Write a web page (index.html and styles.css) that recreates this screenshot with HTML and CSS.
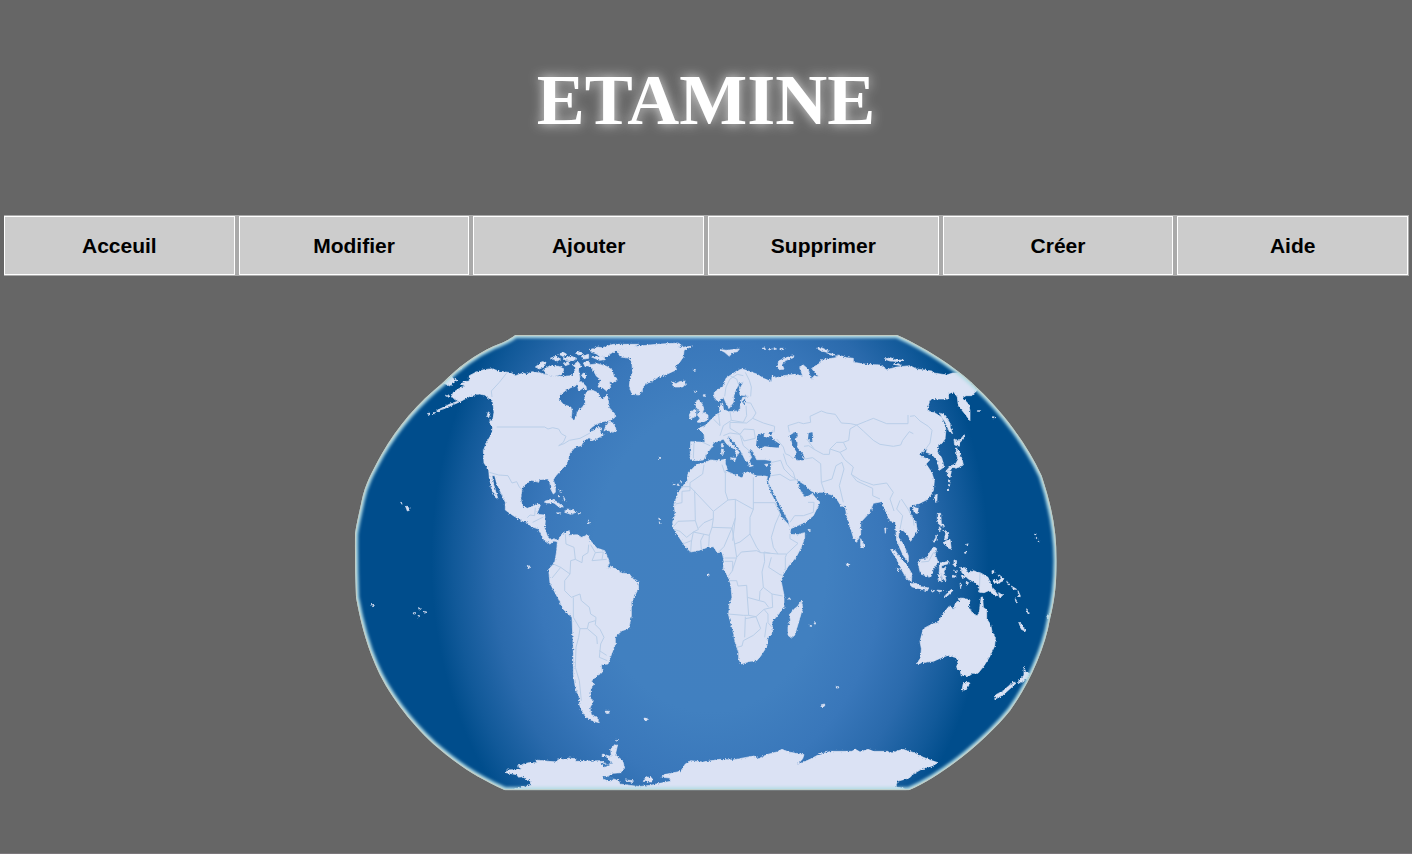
FILE: index.html
```
<!DOCTYPE html>
<html lang="fr">
<head>
<meta charset="utf-8">
<title>ETAMINE</title>
<link rel="stylesheet" href="styles.css">
</head>
<body>
<header class="banner"><h1 class="title">ETAMINE</h1></header>
<nav class="menu">
<a class="menu-item" href="#">Acceuil</a>
<a class="menu-item" href="#">Modifier</a>
<a class="menu-item" href="#">Ajouter</a>
<a class="menu-item" href="#">Supprimer</a>
<a class="menu-item" href="#">Créer</a>
<a class="menu-item" href="#">Aide</a>
</nav>
<main class="content">
<svg class="map" viewBox="9 13 2118 1392" role="img" aria-label="Carte du monde">
<defs>
<radialGradient id="ocean" gradientUnits="userSpaceOnUse" cx="0" cy="0" r="1" gradientTransform="translate(1080 705) scale(836 1080)">
<stop offset="0" stop-color="#4280c0"/><stop offset=".42" stop-color="#4180c0"/><stop offset=".62" stop-color="#3977ba"/><stop offset=".78" stop-color="#2a6aac"/><stop offset=".92" stop-color="#115999"/><stop offset="1" stop-color="#004d8c"/>
</radialGradient>
<path id="globe" d="M496 28H1641C1740 72 1835 138 1885 190C1960 260 2030 355 2075 450C2105 540 2120 615 2120 705C2120 790 2110 840 2100 880C2085 970 2035 1080 1980 1155C1920 1230 1790 1345 1676 1394H465C370 1350 320 1315 250 1255C180 1190 110 1100 75 1015C45 945 30 880 18 815Q14 720 15 625C20 590 28 560 35 525C45 475 65 440 95 385C145 300 200 235 280 170C330 120 375 88 430 62Q480 42 496 28Z"/>
<clipPath id="disc"><use href="#globe"/></clipPath>
<filter id="soft" x="-5%" y="-5%" width="110%" height="110%"><feGaussianBlur stdDeviation="4"/></filter>
<filter id="coast" x="-5%" y="-5%" width="110%" height="110%" color-interpolation-filters="sRGB"><feTurbulence type="fractalNoise" baseFrequency=".2" numOctaves="2" seed="4" result="noise"/><feDisplacementMap in="SourceGraphic" in2="noise" scale="9" xChannelSelector="R" yChannelSelector="G"/></filter>
</defs>
<g clip-path="url(#disc)">
<use href="#globe" fill="url(#ocean)"/>
<g class="land">
<!-- North America -->
<path d="M358 150L375 141 398 133 424 129 450 137 482 141 496 150 520 142 530 146 546 138 572 142 604 152 640 152 668 150 676 132 684 124 690 160 684 175 662 186 646 195 630 208 626 220 640 236 662 244 666 256 664 276 672 284 680 272 682 256 696 246 706 232 704 212 712 196 728 194 745 202 750 214 758 222 772 206 778 246 794 264 794 276 780 284 758 288 738 296 724 306 716 318 730 316 742 304 756 308 750 320 760 328 738 340 724 346 720 336 700 346 694 360 676 364 660 382 654 402 650 416 632 434 618 450 610 462 616 482 616 500 610 505 602 490 600 470 590 460 568 462 566 470 545 464 526 476 516 490 512 520 518 542 532 548 548 542 556 536 572 536 564 556 560 566 584 568 586 585 584 608 592 630 605 643 615 637 626 650 612 645 600 655 580 640 565 610 545 603 530 590 515 585 490 570 466 553 466 530 452 500 440 472 434 450 426 450 432 480 444 520 436 515 424 488 418 455 416 432 402 412 400 375 410 350 425 325 428 306 418 288 428 284 432 260 428 225 412 215 405 208 385 205 360 212 330 228 280 250 262 254 300 235 325 226 304 214 310 200 325 190 345 180 330 175 340 168 358 166Z"/>
<path d="M276 170L290 158 302 145 308 158 322 164 306 174 302 182ZM324 128L332 122 334 130ZM232 264L240 262 240 268ZM246 262L254 260 252 266ZM258 257L270 252 268 258ZM288 210L298 210 294 216ZM414 260L420 262 416 276 412 270ZM420 284L440 306 434 310 422 296ZM584 527L602 521 618 527 640 543 630 546 612 532 588 532ZM644 560L650 550 668 552 678 560 662 566ZM620 562L632 561 628 566ZM684 560L692 562 686 566ZM630 490L634 498 630 500ZM624 508L630 514 626 514ZM640 512L648 528 644 526ZM152 530L158 532 156 536ZM166 540L176 546 178 554 172 556ZM714 582L718 590 716 596Z"/>
<!-- Arctic islands and Greenland -->
<path d="M556 124L576 108 588 110 582 124 568 130ZM580 132L600 120 626 122 642 130 636 146 612 152 592 148ZM600 98L618 92 632 100 622 106ZM626 86L640 80 650 86 640 92ZM640 98L664 92 680 98 668 106 646 104ZM640 112L654 108 658 116 646 120ZM668 118L684 108 694 122 684 132ZM676 82L690 76 698 84 686 88ZM700 112L716 106 720 116 706 124ZM694 92L716 86 716 98 700 100ZM720 72L744 64 756 66 790 56 832 56 866 56 846 66 810 72 788 80 770 92 752 94 738 84 724 80ZM720 92L760 94 766 102 748 104ZM716 118L742 114 770 122 788 134 790 148 802 160 792 170 778 168 782 186 770 196 758 186 744 184 752 162 738 150 730 134ZM680 170L694 168 708 182 710 192 698 188 686 196ZM700 142L710 148 704 160 694 150ZM770 294L782 286 794 300 800 316 788 320 768 312 762 316Z"/>
<path d="M800 76L844 64 860 62 920 56 984 52 994 58 986 66 1024 62 1002 74 1000 94 986 114 974 118 980 132 954 144 938 150 914 160 906 168 886 174 876 194 868 208 846 206 838 182 840 160 848 142 846 116 840 98 812 94ZM966 168L978 174 988 168 1004 166 1008 174 998 184 970 184ZM1110 72L1130 74 1168 70 1162 78 1142 82 1138 92 1124 80Z"/>
<path d="M1030 131H1036V134H1030ZM1034 196H1040V200H1034ZM1060 207H1066V212H1060ZM1236 68L1246 66 1246 72ZM1256 68L1266 71 1258 73ZM1272 66L1280 70 1272 72ZM1290 68L1302 68 1300 72 1290 73ZM926 394L932 397 930 400ZM968 472L976 476 970 477ZM980 478L984 474 988 480ZM990 470L994 466 994 472ZM926 577L930 580 928 583ZM928 588L932 592 928 594Z"/>
</g>
<g transform="translate(990 0)">
<g class="land">
<!-- Europe and Asia -->
<path d="M170 136L186 130 205 136 232 146 250 158 275 168 276 150 290 156 310 150 345 146 368 150 358 124 370 118 384 130 390 150 396 162 402 150 418 154 404 140 395 128 420 112 424 102 440 100 468 96 475 88 500 96 520 98 520 110 560 116 600 118 620 132 650 124 690 120 710 130 755 136 762 142 800 148 818 142 840 142 865 165 893 192 875 210 858 210 848 216 866 236 870 255 870 285 855 265 835 240 832 214 820 198 805 205 806 220 750 220 742 255 765 262 785 275 798 310 795 340 785 354 775 355 772 378 785 396 792 424 778 434 772 405 755 385 738 380 742 370 732 372 720 388 728 395 750 402 738 415 755 440 763 465 760 495 745 520 715 535 698 538 688 546 690 565 708 590 712 615 692 647 685 630 670 615 658 613 655 635 670 655 685 690 685 708 670 690 650 645 646 590 630 585 620 565 605 528 580 533 570 560 542 590 542 625 530 650 520 635 500 570 495 540 484 542 470 520 455 508 430 500 402 500 392 495 384 486 372 476 350 462 358 488 372 514 384 512 397 504 405 515 420 530 400 570 375 590 330 610 325 585 305 550 295 530 265 470 272 450 274 405 255 402 230 402 222 385 216 372 205 375 215 395 208 405 214 420 196 404 180 372 150 335 143 330 148 345 178 380 166 398 168 374 140 355 130 340 118 346 100 352 95 365 80 385 70 403 45 405 30 400 32 348 75 350 72 325 55 308 75 300 100 275 120 260 118 240 128 232 130 250 145 258 180 255 182 232 188 215 212 212 180 208 178 192 190 170 178 172 162 205 160 230 148 248 138 232 130 215 115 228 102 215 103 200 130 180 138 158Z"/>
<path d="M46 228L56 222 66 234 72 250 68 258 84 268 84 282 68 290 50 290 60 278 52 268 58 256 48 244ZM34 256L48 250 48 272 30 280 28 268ZM124 354H130V364H124ZM124 370L130 370 130 386 124 386ZM150 396L168 398 164 406ZM206 416L220 420 208 423ZM254 416L266 415 260 423ZM292 124L296 106 318 96 342 90 340 96 318 104 306 116 312 130 298 132ZM410 68L424 66 446 76 442 80 424 76ZM440 82L472 88 452 88ZM612 100L632 96 644 102 672 104 660 108 630 106ZM640 116L656 114 664 120Z"/>
<!-- East Asian islands -->
<path d="M778 262L790 266 806 286 814 300 810 304 818 324 808 318 798 294ZM822 340L834 346 844 338 852 328 850 340 840 350 838 362 824 358ZM828 366L838 378 846 400 850 418 838 424 828 428 820 424 810 434 798 436 812 420 826 416 834 402 830 384ZM802 436L814 436 810 456 802 450ZM806 462L810 464 808 470ZM804 490L808 492 804 496ZM766 508L772 506 770 530 764 524ZM700 542L716 540 712 564 702 560ZM892 255H902V257H892ZM936 272L948 276 938 276Z"/>
</g>
<g class="sea">
<path d="M228 362L232 330 246 322 256 324 250 332 262 336 274 330 280 342 298 354 296 366 272 364 254 362 240 370ZM264 322L278 318 274 328ZM328 330L344 320 354 324 352 334 344 340 352 352 352 366 370 386 370 404 350 404 344 392 350 380 338 360 334 344ZM386 322L396 320 400 334 394 348 384 340ZM186 228L196 218 194 238ZM720 540L710 536 700 544 716 548Z"/>
</g>
<g class="border">
<path d="M134 212L138 184 150 160 172 146 190 150M196 140L208 164 214 184 212 212M180 190L170 160 150 150M150 258L154 284 130 300 120 330M154 284L190 290 200 270 198 240M190 230L212 232 228 262 218 278 250 292 284 302 282 320M218 278L200 292 150 290 150 308 180 326 192 310 222 312 226 338 192 346 184 330M115 262L120 300 100 280M130 330L150 322 180 326 190 360 204 372M340 400L330 390 316 384 310 364 290 340M328 320L324 300 356 290 370 294 392 290 390 272 424 256 440 262 466 266 484 292 512 294 530 298 560 286 580 278 620 294 660 294 684 294V268M690 272L704 270 720 286 745 302 756 314 750 352 730 380M530 298L550 316 580 344 600 356 640 362 662 358 668 344 688 318 700 324M530 298L510 310 506 344 490 350 500 370 480 380 494 402 520 424 514 446 542 464 580 478M514 446L530 466 578 488 578 510 600 520M580 478L620 472 640 500 630 520 642 556M660 524L650 550 668 570 660 610M664 520L684 550 700 580 702 600M372 362L386 360 404 372 430 386 448 386 450 370 470 350 490 350M450 370L480 380M404 372L380 340M374 400L398 396 422 414 424 470 434 500M424 470L456 460 468 420 486 410M486 410L492 430 478 480 490 530M276 410L302 404 312 430 334 452 350 462M310 384L320 416 340 440 346 462M274 450L300 446 330 464 350 462M330 590L344 570 370 570 400 560 402 530 384 530M42 352L40 398M68 350L90 360"/>
</g>
</g>
<!-- Africa -->
<g transform="translate(870 345)">
<g class="land"><path d="M168 72L190 68 212 58 234 60 256 56 256 70 262 82 256 90 284 102 306 112 312 98 322 94 350 106 374 106 382 108 380 122 386 138 394 160 410 190 416 210 424 228 444 250 452 264 450 280 470 282 494 276 494 292 484 320 468 350 444 378 428 404 424 424 432 464 432 500 418 518 396 544 398 578 384 592 380 618 362 646 350 660 330 662 304 670 296 656 296 636 286 606 278 566 266 524 268 494 276 470 272 430 264 408 250 384 252 360 246 334 232 336 220 318 202 320 182 328 152 334 136 318 120 294 100 262 98 244 106 222 102 190 116 154 130 134 142 122 144 96 160 82ZM484 478L488 502 476 544 464 584 454 592 444 584 444 556 452 540 448 522 462 506 474 496ZM662 294L674 316 668 324 662 316ZM504 266L512 268 506 270ZM620 370H626V374H620ZM510 552L516 556 512 558ZM522 546L528 548 524 552ZM204 400H207V406H204ZM446 472H450V476H446Z"/></g>
<path class="border" d="M192 72L188 100 150 126 150 138 124 138M150 138L220 212 264 178 286 176 340 206 340 110M340 186H404L410 192M254 96L246 72M256 92L256 154 264 178M150 138V150L126 152V186L106 190M164 150L166 240 114 242 102 256M220 212L220 234 192 246 174 264 166 240M220 234L216 260 276 262 286 232 286 176M340 206L330 230 330 280 300 304 284 310 276 262M330 280L350 320 362 336 392 338M404 186L420 218 406 250 394 290 400 320 414 340 440 340 474 308 450 294 450 280M440 340L436 350 436 390M414 340L392 338 372 334 374 362 366 394 370 440 360 452 358 480 322 470 320 434 294 436 290 420 270 420M284 310L290 350 276 392 264 408M290 350L304 334 350 330 362 336M254 352H288M254 362H278V390M394 350L386 380 420 402 428 404M370 440L396 460 428 466M396 460L398 500 372 506 348 528 326 524 322 470M358 480L374 484 386 500M264 520L310 524 326 524M372 506L384 520 384 546 396 560M348 528L362 564 340 584 310 600 306 616 290 620M316 528L314 590M348 528L316 534M380 546L374 590M176 266L160 274 154 304 152 334M192 280L182 300 184 326M208 284L206 318M216 260L208 284 160 274 140 290 120 272 102 266M128 310L154 300M276 262L252 318 236 334M286 232L278 300"/>
</g>
<!-- South America -->
<g transform="translate(0 525)">
<g class="land"><path d="M622 125L634 102 654 92 658 90 656 104 682 102 694 110 706 106 712 100 718 116 740 142 764 150 774 172 778 188 770 206 784 198 806 208 810 216 838 220 850 236 864 242 866 262 852 290 844 308 844 346 836 384 816 390 796 408 796 430 784 462 774 490 754 492 756 516 740 526 724 542 732 548 722 568 720 592 730 600 720 622 724 642 740 650 748 666 730 662 708 650 694 628 688 610 688 592 676 560 670 520 670 450 666 350 640 326 626 296 600 248 596 206 614 186 620 152ZM532 194L542 200 534 204ZM64 310L74 316 68 318ZM206 322L214 324 208 328ZM190 336H196V340H190ZM204 344L210 346 204 349ZM222 332L230 334 224 338ZM766 632L778 632 774 638ZM882 652L892 656 886 660Z"/></g>
<path class="border" d="M646 100L648 130 672 140 676 176 696 186 698 166 714 156 716 132M610 190L632 200 660 220 662 180 676 176M606 232L624 210 632 200M660 220L644 240 644 270 664 290 690 280 694 300 718 320 722 340 738 350 736 372 750 386 762 410 752 430 748 470 772 480M670 290L670 350 690 384 686 410 678 440 676 500 688 540 694 600M690 384L712 384 716 366 736 360M712 384L740 408 742 430M722 132L736 156 726 180 770 176M736 156L760 154 756 176M748 450L770 464"/>
</g>
<!-- Southeast Asia and Oceania -->
<g transform="translate(1470 465)">
<g class="land">
<path d="M152 206L166 210 184 236 200 252 216 280 214 304 200 294 184 266 170 236ZM210 310L228 308 244 318 266 322 262 330 236 324 214 318ZM270 328L284 330 278 334ZM290 328L308 330 298 334ZM312 348L334 326 338 330 322 346ZM282 198L290 204 286 222 294 244 280 266 272 290 242 280 234 248 242 236 258 234 270 214ZM298 248L326 242 328 248 304 256 306 264 318 260 312 272 318 300 308 296 304 276 304 304 294 298 298 270ZM342 238L350 240 348 258 342 256ZM344 268L352 272 348 278ZM362 260L378 262 384 278 400 270 424 278 444 290 456 318 474 344 466 346 446 330 432 336 416 334 418 316 402 304 386 296 366 276ZM458 298L476 300 488 290 490 300 474 308 460 304ZM474 280L492 294 488 298ZM500 302L510 312 504 312ZM514 316L530 326 520 326ZM534 330L542 348 536 348ZM476 336L488 344 478 350ZM292 98L302 98 304 128 314 136 310 140 296 130 292 118ZM306 146L326 158 322 174 314 174 318 156ZM310 184L330 176 334 206 320 196 312 190ZM280 184L292 162 286 184ZM298 138L304 146 298 150ZM360 306L366 314 362 324ZM378 302L386 306 380 314ZM338 284L352 288 340 290ZM364 284L378 288 366 290ZM172 260L178 270 174 270ZM134 142L138 142 136 158ZM326 12H330V16H326ZM380 190L384 190 382 196ZM374 214H378V218H374ZM584 160H588V162H584ZM594 182L598 182 596 186ZM586 170H590V174H586ZM20 250H26V253H20ZM456 270H462V276H456ZM560 384L568 398 562 396ZM536 424L546 432 556 452 544 446ZM620 408L632 400 628 416ZM526 354L532 366 528 366Z"/>
<path d="M354 354L368 352 390 358 386 378 396 396 412 406 418 392 424 346 428 350 430 380 440 388 440 414 452 432 456 452 466 472 464 496 448 530 430 558 414 578 398 578 384 588 374 582 364 586 360 568 350 562 354 538 344 530 324 524 298 534 280 542 244 546 234 552 232 546 242 532 244 504 240 482 250 444 276 430 294 426 308 400 328 376 342 386 346 366 360 360ZM370 608L384 604 390 608 378 628 366 628ZM552 556L556 574 568 578 562 594 548 602 536 610 536 600 552 584ZM522 604L528 608 510 624 490 642 472 652 464 656 468 642 490 630 506 616Z"/>
</g>
<path class="border" d="M420 276L418 334M244 244L266 242 280 216 288 214"/>
</g>
<!-- Antarctica -->
<g transform="translate(720 1065)">
<g class="land"><path d="M-260 332L-176 314 -180 300 -204 288 -214 290 -220 282 -252 276 -248 268 -204 266 -218 256 -184 246 -158 246 -164 238 -100 244 -94 234 -66 238 -68 232 -42 234 -44 242 30 240 52 252 68 248 54 236 48 226 36 228 38 220 64 228 62 206 76 190 82 196 76 222 98 240 104 262 92 276 70 278 54 286 68 294 86 300 90 310 148 318 182 314 210 308 242 302 240 292 216 290 222 282 272 272 286 250 302 240 340 244 390 236 428 238 480 228 492 226 506 234 530 222 560 214 576 206 596 214 642 222 638 234 622 252 660 236 690 220 724 212 786 212 796 206 810 214 834 206 850 212 894 212 900 218 938 206 972 216 1000 230 1020 238 1044 246 1026 256 994 266 970 280 958 292 922 302 918 318 942 324 960 340H-260ZM160 302L168 288 186 292 186 304ZM106 298L130 300 128 306ZM80 176L84 178 80 182ZM-126 246L-118 244 -120 250ZM46 92L58 92 56 98 48 98ZM162 112L172 114 170 120 164 118ZM694 72L704 70 704 76 696 78ZM738 18H746V22H738Z"/></g>
<path class="sea" d="M40 234L60 246 70 250 56 240ZM30 246L60 254 42 260ZM38 286L60 288 72 294 62 302 40 296Z"/>
</g>
<path class="border" d="M470 142L448 170 424 196 426 214M440 304H584L594 310 608 306 626 310 634 324 648 332 640 350 626 360 642 354 658 344 690 338 720 322M418 440L446 448 474 450 486 472 500 468 508 484 518 494M532 576L540 568 554 570 556 546M548 590L580 574"/>
<use class="halo" href="#globe" filter="url(#soft)"/>
<use class="rim" href="#globe"/>
</g>
</svg>
</main>
</body>
</html>
```
FILE: styles.css
```
* { box-sizing: border-box; }

body {
  display: flex;
  flex-direction: column;
  min-height: 100vh;
  margin: 0;
  background: #666;
  border-bottom: 1px solid #7b777b;
}

.banner {
  display: flex;
  justify-content: center;
  padding: 56px 16px 71px;
}

.title {
  margin: 0;
  color: #fff;
  font: bold 72px/88px "Liberation Serif", serif;
  text-shadow: 0 0 12px #ddd;
}

.menu {
  display: grid;
  grid-template-columns: repeat(6, 1fr);
  gap: 4px;
  margin: 0 3px 0 4px;
  padding: 1px 1px 1px 0;
  background: #aaa;
}

.menu-item {
  padding: 15px 8px 14px;
  border: 1px solid #fff;
  background: #ccc;
  color: #000;
  font: bold 21px/28px "Liberation Sans", sans-serif;
  text-align: center;
  text-decoration: none;
}

.content {
  display: flex;
  justify-content: center;
  padding: 54px 0 58px;
}

.map {
  display: block;
  width: 50%;
  height: auto;
}

.land {
  fill: #dbe2f4;
  stroke: #dbe2f4;
  stroke-width: 2;
  stroke-linejoin: round;
  filter: url(#coast);
}

.sea {
  fill: #3f7dbe;
  filter: url(#coast);
}

.border {
  fill: none;
  stroke: #b9cee8;
  stroke-width: 3;
  stroke-linejoin: round;
}

.halo {
  fill: none;
  stroke: #b4dce4;
  stroke-width: 18;
}

.rim {
  fill: none;
  stroke: #c3cdc4;
  stroke-width: 6;
}
```
